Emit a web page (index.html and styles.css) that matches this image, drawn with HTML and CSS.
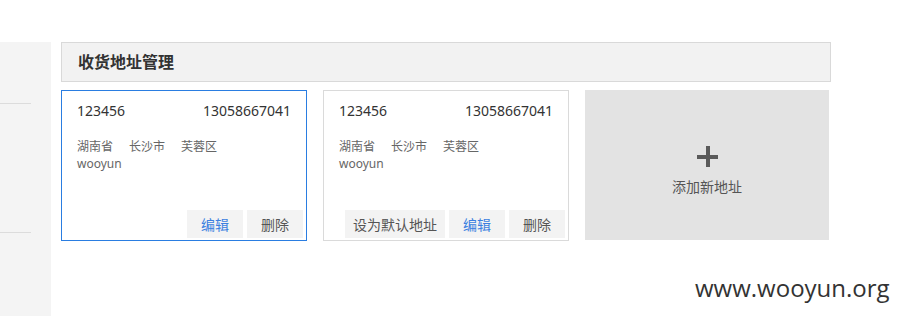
FILE: index.html
```html
<!DOCTYPE html>
<html lang="zh-CN">
<head>
    <meta charset="UTF-8">
    <title>收货地址管理</title>
    <link rel="stylesheet" href="styles.css">
</head>
<body>
    <div class="page">
        <div class="sidebar">
            <div class="side-item"></div>
            <div class="side-item tall"></div>
        </div>

        <div class="main">
            <div class="panel-title">收货地址管理</div>

            <div class="address-list">
                <div class="address-card active">
                    <div class="card-top">
                        <span>123456</span>
                        <span>13058667041</span>
                    </div>
                    <div class="region">
                        <span>湖南省</span><span>长沙市</span><span>芙蓉区</span>
                    </div>
                    <div class="detail">wooyun</div>
                    <div class="actions">
                        <button class="btn btn-edit">编辑</button>
                        <button class="btn">删除</button>
                    </div>
                </div>

                <div class="address-card">
                    <div class="card-top">
                        <span>123456</span>
                        <span>13058667041</span>
                    </div>
                    <div class="region">
                        <span>湖南省</span><span>长沙市</span><span>芙蓉区</span>
                    </div>
                    <div class="detail">wooyun</div>
                    <div class="actions">
                        <button class="btn btn-wide">设为默认地址</button>
                        <button class="btn btn-edit">编辑</button>
                        <button class="btn">删除</button>
                    </div>
                </div>

                <div class="add-card">
                    <span class="plus"></span>
                    <span class="add-text">添加新地址</span>
                </div>
            </div>
        </div>
    </div>

    <div class="watermark">www.wooyun.org</div>
</body>
</html>
```

FILE: styles.css
```css
body {
    margin: 0;
    height: 316px;
    overflow: hidden;
    background: #fff;
    font-family: "Noto Sans", "Noto Sans CJK SC", sans-serif;
    color: #333;
}

.page {
    display: flex;
    gap: 10px;
    padding-top: 42px;
    height: 274px;
}

.sidebar {
    width: 51px;
    background-color: #f4f4f4;
}

.side-item {
    width: 31px;
    height: 61px;
    border-bottom: 1px solid #dcdcdc;
}

.side-item.tall {
    height: 128px;
}

.main {
    width: 770px;
}

.panel-title {
    height: 38px;
    line-height: 38px;
    padding-left: 16px;
    background-color: #f2f2f2;
    border: 1px solid #d9d9d9;
    font-size: 16px;
    font-weight: bold;
    color: #333;
}

.address-list {
    display: flex;
    gap: 16px;
    margin-top: 8px;
}

.address-card {
    width: 244px;
    height: 149px;
    border: 1px solid #dadada;
    display: flex;
    flex-direction: column;
}

.address-card.active {
    border-color: #2a7de1;
}

.card-top {
    display: flex;
    justify-content: space-between;
    padding: 9px 15px 0 15px;
    font-size: 14px;
    line-height: 22px;
    color: #333;
}

.region {
    margin-top: 16px;
    padding-left: 15px;
    font-size: 12px;
    line-height: 17px;
    color: #666;
}

.region span {
    margin-right: 16px;
}

.detail {
    padding-left: 15px;
    font-size: 12px;
    line-height: 17px;
    color: #666;
}

.actions {
    margin-top: auto;
    display: flex;
    justify-content: flex-end;
    gap: 4px;
    padding: 0 3px 2px 0;
}

.btn {
    width: 56px;
    height: 28px;
    padding: 0;
    border: none;
    background-color: #f3f3f3;
    font-family: "Noto Sans CJK SC", sans-serif;
    font-size: 14px;
    color: #555;
}

.btn-wide {
    width: 100px;
}

.btn-edit {
    color: #3b7fe0;
}

.add-card {
    width: 244px;
    height: 138px;
    padding-top: 12px;
    background-color: #e3e3e3;
    display: flex;
    flex-direction: column;
    align-items: center;
    justify-content: center;
    gap: 9px;
}

.plus {
    position: relative;
    width: 21px;
    height: 21px;
}

.plus::before,
.plus::after {
    content: "";
    position: absolute;
    background-color: #5a5a5a;
}

.plus::before {
    left: 0;
    top: 9px;
    width: 21px;
    height: 4px;
}

.plus::after {
    left: 9px;
    top: 0;
    width: 4px;
    height: 21px;
}

.add-text {
    font-size: 14px;
    color: #555;
}

.watermark {
    position: absolute;
    left: 695px;
    top: 271px;
    font-family: "Open Sans", sans-serif;
    font-size: 24px;
    color: #333;
}
```
